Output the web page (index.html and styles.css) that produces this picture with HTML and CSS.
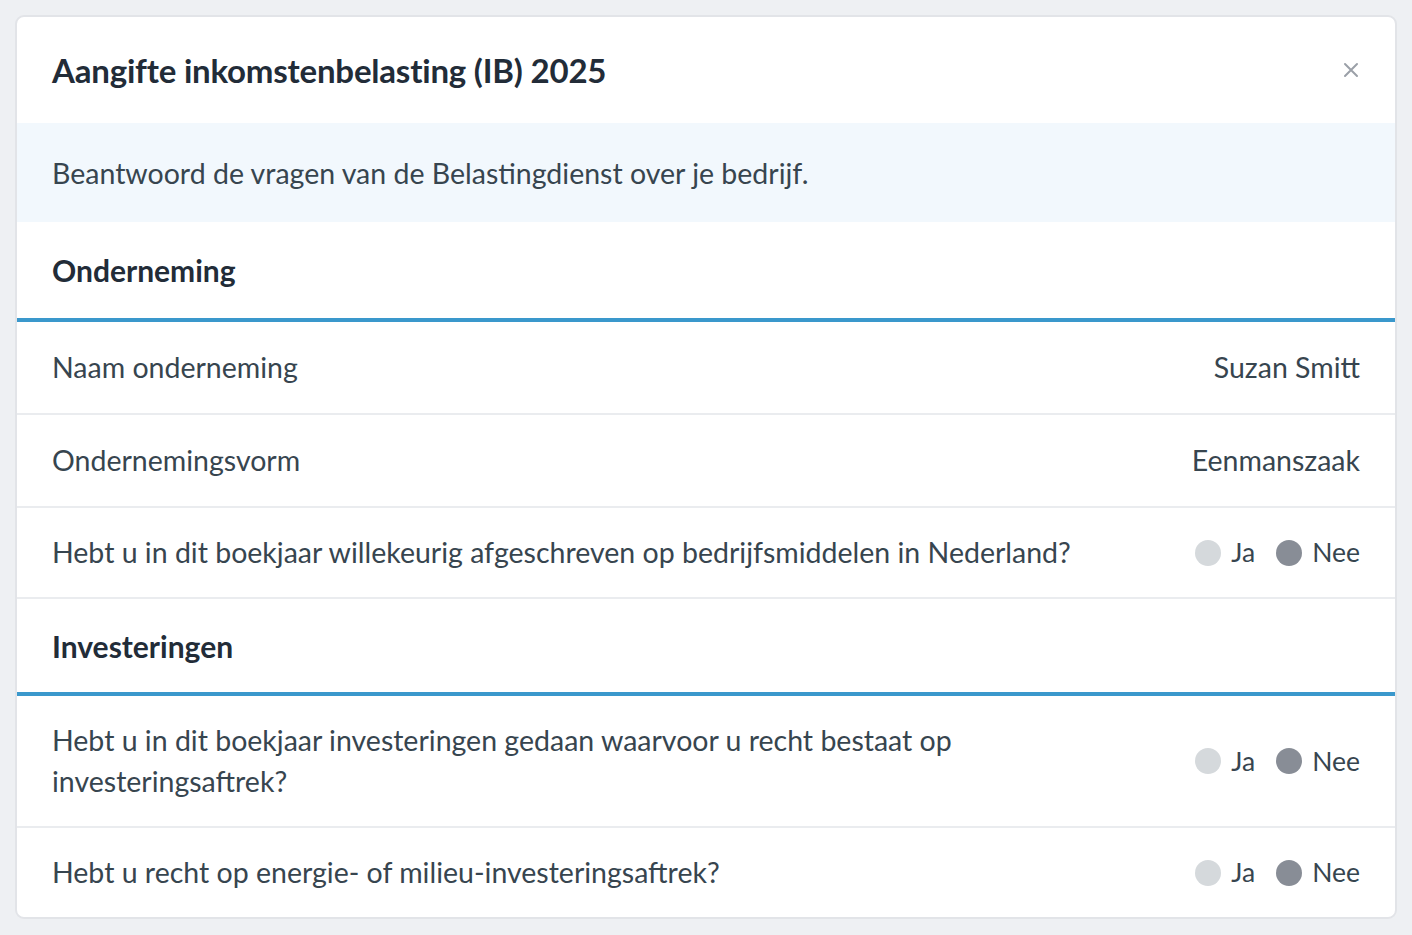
FILE: index.html
```html
<!DOCTYPE html>
<html lang="nl">
<head>
    <meta charset="utf-8">
    <title>Aangifte inkomstenbelasting (IB) 2025</title>
    <link rel="stylesheet" href="styles.css">
</head>
<body>
    <div class="modal">
        <div class="modal-header">
            <h1>Aangifte inkomstenbelasting (IB) 2025</h1>
            <button class="close" aria-label="Sluiten">
                <svg width="16" height="16" viewBox="0 0 16 16">
                    <path d="M2 2 L14 14 M14 2 L2 14" stroke="#9ba0a8" stroke-width="2" stroke-linecap="round"/>
                </svg>
            </button>
        </div>

        <div class="intro">Beantwoord de vragen van de Belastingdienst over je bedrijf.</div>

        <h2 class="section">Onderneming</h2>

        <div class="row">
            <div class="label">Naam onderneming</div>
            <div class="value">Suzan Smitt</div>
        </div>
        <div class="row">
            <div class="label">Ondernemingsvorm</div>
            <div class="value">Eenmanszaak</div>
        </div>
        <div class="row short">
            <div class="label">Hebt u in dit boekjaar willekeurig afgeschreven op bedrijfsmiddelen in Nederland?</div>
            <div class="choice">
                <span class="option"><span class="dot"></span>Ja</span>
                <span class="option"><span class="dot selected"></span>Nee</span>
            </div>
        </div>

        <h2 class="section after-row">Investeringen</h2>

        <div class="row tall">
            <div class="label narrow">Hebt u in dit boekjaar investeringen gedaan waarvoor u recht bestaat op investeringsaftrek?</div>
            <div class="choice">
                <span class="option"><span class="dot"></span>Ja</span>
                <span class="option"><span class="dot selected"></span>Nee</span>
            </div>
        </div>
        <div class="row last">
            <div class="label">Hebt u recht op energie- of milieu-investeringsaftrek?</div>
            <div class="choice">
                <span class="option"><span class="dot"></span>Ja</span>
                <span class="option"><span class="dot selected"></span>Nee</span>
            </div>
        </div>
    </div>
</body>
</html>
```

FILE: styles.css
```css
body {
    margin: 0;
    padding: 15px 15px;
    background-color: #eef0f3;
    font-family: Lato, "Open Sans", sans-serif;
    color: #37454f;
}

.modal {
    background: white;
    border: 2px solid #e2e4e8;
    border-radius: 9px;
    overflow: hidden;
}

.modal-header {
    display: flex;
    align-items: center;
    justify-content: space-between;
    height: 106px;
    padding: 0 36px 0 35px;
}

.modal-header h1 {
    margin: 0;
    font-size: 33px;
    font-weight: 700;
    color: #222c38;
    letter-spacing: -0.2px;
}

.close {
    background: none;
    border: none;
    padding: 0;
    margin-right: 0;
    cursor: pointer;
    display: flex;
}

.intro {
    background-color: #f2f8fd;
    height: 99px;
    display: flex;
    align-items: center;
    padding: 0 35px;
    font-size: 28.5px;
}

.section {
    margin: 0;
    height: 96px;
    display: flex;
    align-items: center;
    padding: 0 35px;
    font-size: 30px;
    font-weight: 700;
    color: #222c38;
    border-bottom: 4px solid #3a98cc;
}

.section.after-row {
    height: 93px;
}

.row {
    display: flex;
    align-items: center;
    justify-content: space-between;
    gap: 40px;
    min-height: 91px;
    padding: 0 35px 0 35px;
    border-bottom: 2px solid #eaecef;
    font-size: 28.5px;
    line-height: 41px;
}

.row.short {
    min-height: 89px;
}

.row.tall {
    min-height: 130px;
}

.row.last {
    border-bottom: none;
    min-height: 89px;
}

.label.narrow {
    max-width: 930px;
}

.value {
    white-space: nowrap;
}

.choice {
    display: flex;
    gap: 21px;
    white-space: nowrap;
    font-size: 26.5px;
}

.option {
    display: flex;
    align-items: center;
    gap: 10px;
}

.dot {
    width: 26px;
    height: 26px;
    border-radius: 50%;
    background-color: #d5d9dc;
}

.dot.selected {
    background-color: #888d96;
}
```
